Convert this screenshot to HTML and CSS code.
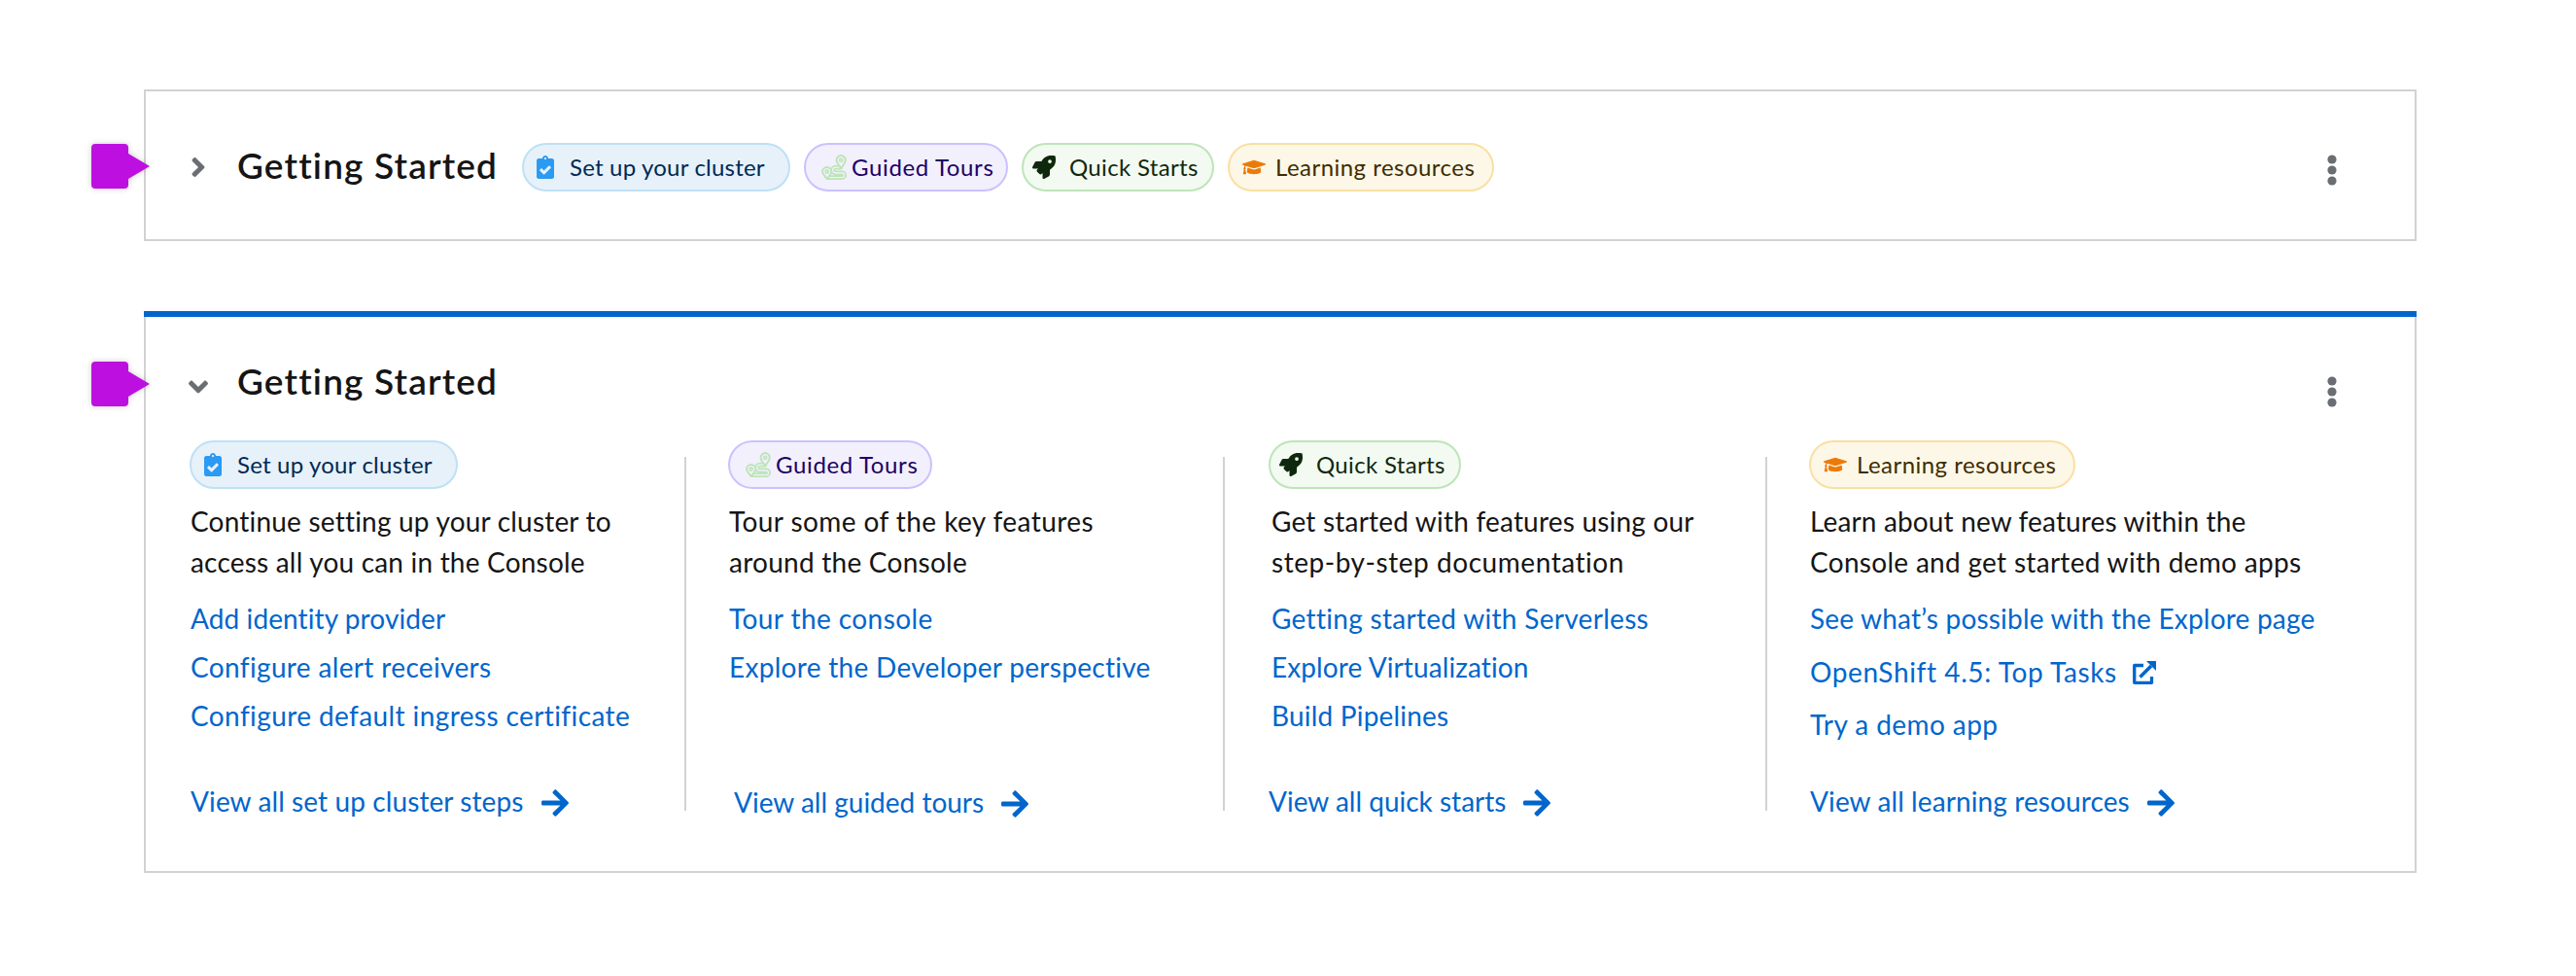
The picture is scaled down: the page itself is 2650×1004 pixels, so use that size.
FILE: index.html
```html
<!DOCTYPE html>
<html lang="en">
<head>
<meta charset="utf-8">
<title>Getting Started</title>
<link rel="stylesheet" href="styles.css">
</head>
<body>
<svg class="sprite" aria-hidden="true">
  <symbol id="i-right" viewBox="0 0 256 512"><path d="M224.3 273l-136 136c-9.4 9.4-24.6 9.4-33.9 0l-22.6-22.6c-9.4-9.4-9.4-24.6 0-33.9l96.4-96.4-96.4-96.4c-9.4-9.4-9.4-24.6 0-33.9L54.3 103c9.4-9.4 24.6-9.4 33.9 0l136 136c9.5 9.4 9.5 24.6.1 34z"/></symbol>
  <symbol id="i-down" viewBox="0 0 320 512"><path d="M143 352.3L7 216.3c-9.4-9.4-9.4-24.6 0-33.9l22.6-22.6c9.4-9.4 24.6-9.4 33.9 0l96.4 96.4 96.4-96.4c9.4-9.4 24.6-9.4 33.9 0l22.6 22.6c9.4 9.4 9.4 24.6 0 33.9l-136 136c-9.2 9.4-24.4 9.4-33.8 0z"/></symbol>
  <symbol id="i-kebab" viewBox="0 0 10 32"><circle cx="5" cy="5" r="4.6"/><circle cx="5" cy="16" r="4.6"/><circle cx="5" cy="27" r="4.6"/></symbol>
  <symbol id="i-arrow" viewBox="0 0 448 512"><path d="M190.5 66.9l22.2-22.2c9.4-9.4 24.6-9.4 33.9 0L441 239c9.4 9.4 9.4 24.6 0 33.9L246.6 467.3c-9.4 9.4-24.6 9.4-33.9 0l-22.2-22.2c-9.5-9.5-9.3-25 .4-34.3L311.4 296H24c-13.3 0-24-10.7-24-24v-32c0-13.3 10.7-24 24-24h287.4L190.9 101.2c-9.8-9.3-10-24.8-.4-34.3z"/></symbol>
  <symbol id="i-clipboard" viewBox="0 0 384 512"><path d="M336 64h-80c0-35.3-28.7-64-64-64s-64 28.7-64 64H48C21.5 64 0 85.5 0 112v352c0 26.5 21.5 48 48 48h288c26.5 0 48-21.5 48-48V112c0-26.5-21.5-48-48-48zM192 40c13.3 0 24 10.7 24 24s-10.7 24-24 24-24-10.7-24-24 10.7-24 24-24m121.2 231.8l-143 141.8c-4.7 4.7-12.3 4.6-17-.1l-82.6-83.3c-4.7-4.7-4.6-12.3.1-17L99.1 285c4.7-4.7 12.3-4.6 17 .1l46 46.4 106-105.2c4.7-4.7 12.3-4.6 17 .1l28.2 28.4c4.7 4.8 4.6 12.3-.1 17z"/></symbol>
  <symbol id="i-rocket" viewBox="0 0 512 512"><path d="M505.12 19.09c-1.19-5.53-6.66-11-12.21-12.18C460.72 0 435.51 0 410.41 0 307.18 0 245.27 55.2 199.05 128H94.84c-16.35.02-35.56 11.88-42.89 26.48L2.52 253.3A28.4 28.4 0 0 0 0 264a24 24 0 0 0 24 24h103.82l-22.48 22.47c-11.36 11.36-13 32.26 0 45.25l50.9 50.9c11.16 11.19 32.16 13.16 45.28 0L224 384.16V488a24 24 0 0 0 24 24 28.56 28.56 0 0 0 10.7-2.52l98.74-49.39c14.63-7.3 26.5-26.5 26.5-42.86V312.8c72.6-46.31 128.04-108.4 128.04-211.1.1-25.2.1-50.4-6.86-82.6zM384.04 168A40 40 0 1 1 424.05 128 40.02 40.02 0 0 1 384.04 168z"/></symbol>
  <symbol id="i-cap" viewBox="0 0 640 512"><path d="M622.34 153.2L343.4 67.5c-15.2-4.67-31.6-4.67-46.79 0L17.66 153.2c-23.54 7.23-23.54 38.36 0 45.59l48.63 14.94c-10.67 13.19-17.23 29.28-17.88 46.9C38.78 266.15 32 276.11 32 288c0 10.78 5.68 19.85 13.86 25.65L20.33 428.53C18.11 438.52 25.71 448 35.94 448h56.11c10.24 0 17.84-9.48 15.62-19.47L82.14 313.65C90.32 307.85 96 298.78 96 288c0-11.57-6.47-21.25-15.66-26.87.76-15.02 8.44-28.3 20.69-36.72L296.6 284.5c9.06 2.78 26.44 6.25 46.79 0l278.95-85.7c23.55-7.24 23.55-38.36 0-45.6zM352.79 315.09c-28.53 8.76-52.84 3.92-65.59 0l-145.02-44.55L128 384c0 35.35 85.96 64 192 64s192-28.65 192-64l-14.18-113.47-145.03 44.56z"/></symbol>
  <symbol id="i-route" viewBox="0 0 26 26">
    <g fill="none" stroke-linecap="round" stroke-linejoin="round">
      <path d="M19.5 13.2H14.6a2.9 2.9 0 0 0 0 5.800H21.300a2.300 2.300 0 0 1 0 4.600H7" stroke="#bde5b8" stroke-width="4.800"/>
      <path d="M19.500 13.200H14.600a2.900 2.900 0 0 0 0 5.800H21.300a2.300 2.300 0 0 1 0 4.600H8.500" stroke="#f2f0fc" stroke-width="1.300"/>
      <path d="M20.200 1.100a4.600 4.600 0 0 1 4.600 4.600c0 2.800-2.400 5.200-4.600 8.400-2.200-3.200-4.600-5.600-4.600-8.400a4.600 4.600 0 0 1 4.600-4.600zM5.700 13.100a4.600 4.600 0 0 1 4.600 4.500c0 2.600-2.200 4.600-4.600 7.300-2.400-2.700-4.600-4.700-4.600-7.300a4.600 4.600 0 0 1 4.600-4.500z" fill="#f2f0fc" stroke="#bde5b8" stroke-width="2"/>
      <circle cx="20.200" cy="5.700" r="1.500" stroke="#bde5b8" stroke-width="1.600"/>
      <circle cx="5.700" cy="17.600" r="1.500" stroke="#bde5b8" stroke-width="1.600"/>
    </g>
  </symbol>
  <symbol id="i-external" viewBox="0 0 24 24">
    <path d="M11 4.500H1.700V22.300H19.500V16" fill="none" stroke="currentColor" stroke-width="3.300" stroke-linejoin="round"/>
    <path d="M7.500 16.500L19 5" fill="none" stroke="currentColor" stroke-width="3.600"/>
    <path d="M14 0H24V10z"/>
  </symbol>
</svg>

<main class="page">
  <section class="card collapsed">
    <span class="marker"></span>
    <span class="toggle"><svg class="right"><use href="#i-right"/></svg></span>
    <h2 class="title">Getting Started</h2>
    <div class="pills">
      <span class="pill setup"><svg><use href="#i-clipboard"/></svg><span class="label">Set up your cluster</span></span>
      <span class="pill tours"><svg><use href="#i-route"/></svg><span class="label">Guided Tours</span></span>
      <span class="pill quick"><svg><use href="#i-rocket"/></svg><span class="label">Quick Starts</span></span>
      <span class="pill learn"><svg><use href="#i-cap"/></svg><span class="label">Learning resources</span></span>
    </div>
    <svg class="kebab"><use href="#i-kebab"/></svg>
  </section>

  <section class="card expanded">
    <span class="marker"></span>
    <header class="head">
      <span class="toggle"><svg class="down"><use href="#i-down"/></svg></span>
      <h2 class="title">Getting Started</h2>
      <svg class="kebab"><use href="#i-kebab"/></svg>
    </header>
    <div class="columns">
      <div class="column c1">
        <span class="pill setup"><svg><use href="#i-clipboard"/></svg><span class="label">Set up your cluster</span></span>
        <p class="desc t20">Continue setting up your cluster to<br>access all you can in the Console</p>
        <ul class="links">
          <li><a class="t10">Add identity provider</a></li>
          <li><a class="t35">Configure alert receivers</a></li>
          <li><a class="t40">Configure default ingress certificate</a></li>
        </ul>
        <a class="more"><span class="t10">View all set up cluster steps</span><svg><use href="#i-arrow"/></svg></a>
      </div>
      <i class="rule"></i>
      <div class="column c2">
        <span class="pill tours"><svg><use href="#i-route"/></svg><span class="label">Guided Tours</span></span>
        <p class="desc"><span class="t45">Tour some of the key features</span><br><span class="t25">around the Console</span></p>
        <ul class="links">
          <li><a class="t45">Tour the console</a></li>
          <li><a class="t30">Explore the Developer perspective</a></li>
        </ul>
        <a class="more"><span>View all guided tours</span><svg><use href="#i-arrow"/></svg></a>
      </div>
      <i class="rule"></i>
      <div class="column c3">
        <span class="pill quick"><svg><use href="#i-rocket"/></svg><span class="label">Quick Starts</span></span>
        <p class="desc"><span class="t20">Get started with features using our</span><br><span class="t55">step-by-step documentation</span></p>
        <ul class="links">
          <li><a class="t30">Getting started with Serverless</a></li>
          <li><a class="t10">Explore Virtualization</a></li>
          <li><a class="t20">Build Pipelines</a></li>
        </ul>
        <a class="more"><span>View all quick starts</span><svg><use href="#i-arrow"/></svg></a>
      </div>
      <i class="rule"></i>
      <div class="column c4">
        <span class="pill learn"><svg><use href="#i-cap"/></svg><span class="label">Learning resources</span></span>
        <p class="desc"><span class="t15">Learn about new features within the</span><br><span class="t30">Console and get started with demo apps</span></p>
        <ul class="links">
          <li><a class="t20">See what’s possible with the Explore page</a></li>
          <li><a class="t60">OpenShift 4.5: Top Tasks</a><svg class="external"><use href="#i-external"/></svg></li>
          <li><a class="t45">Try a demo app</a></li>
        </ul>
        <a class="more"><span class="t10">View all learning resources</span><svg><use href="#i-arrow"/></svg></a>
      </div>
    </div>
  </section>
</main>
</body>
</html>
```
FILE: styles.css
```css
* { box-sizing: border-box; }
body {
  margin: 0;
  background: #fff;
  color: #151515;
  font-family: Lato, "Liberation Sans", sans-serif;
  font-size: 28px;
  font-variant-ligatures: none;
}
svg { display: block; flex: none; fill: currentColor; }
.sprite { position: absolute; width: 0; height: 0; }
.page { padding: 92px 164px 0 148px; }

.card { position: relative; border: 2px solid #d2d2d2; background: #fff; }
.collapsed { display: flex; align-items: center; height: 156px; padding: 0 80px 0 44px; }
.expanded { margin-top: 72px; height: 578px; border-top: 0; }
.expanded::before { content: ""; display: block; height: 6px; margin: 0 -2px; background: #06c; }

/* callout flags that overlap the card's left edge */
.marker {
  position: absolute; left: -56px; top: 54px;
  width: 38px; height: 46px;
  border-radius: 4px; background: #bd10e0;
  filter: drop-shadow(0 0 3px rgba(0, 0, 0, .2));
}
.marker::after {
  content: ""; position: absolute; left: 38px; top: 10px;
  border: solid transparent; border-width: 13px 0 13px 22px; border-left-color: #bd10e0;
}
.expanded .marker { top: 52px; }

.toggle { width: 50px; color: #6a6e73; }
.collapsed .toggle { margin-top: 4px; }
.right { width: 16px; height: 32px; margin-left: 2px; }
.down { width: 20px; height: 32px; }
.title { margin: 0; width: 293px; font-size: 37px; line-height: 44px; font-weight: 600; letter-spacing: 1.15px; white-space: nowrap; }
.kebab { width: 10px; height: 32px; margin-left: auto; color: #6a6e73; }
.collapsed .kebab { margin-top: 10px; }
.head { display: flex; align-items: flex-start; height: 127px; padding: 44px 80px 0 44px; }
.head .toggle { padding-top: 12px; }
.head .kebab { margin-top: 17px; }

.pills { display: flex; gap: 14px; margin-top: 4px; }
.pill {
  display: flex; align-items: center; height: 50px; flex: none;
  border: 2px solid; border-radius: 25px;
  font-size: 24px; line-height: 44px; white-space: nowrap;
}
.label { margin-top: -1px; }
.setup { width: 276px; padding-left: 13px; gap: 16px; background: #e7f1fa; border-color: #bee1f4; }
.setup svg { width: 18px; height: 24px; color: #2b9af3; }
.setup .label { color: #002952; letter-spacing: .2px; }
.tours { width: 210px; padding-left: 16px; gap: 5px; background: #f2f0fc; border-color: #cbc1ff; }
.tours svg { width: 26px; height: 26px; }
.tours .label { color: #1f0066; letter-spacing: .64px; }
.quick { width: 198px; padding-left: 9px; gap: 14px; background: #f3faf2; border-color: #bde5b8; }
.quick svg { width: 24px; height: 24px; color: #0f280d; }
.quick .label { color: #0f280d; letter-spacing: .34px; }
.learn { width: 274px; padding-left: 13px; gap: 10px; background: #fdf7e7; border-color: #f9e0a2; }
.learn svg { width: 24px; height: 20px; color: #ec7a08; }
.learn .label { color: #3d2c00; letter-spacing: .47px; }

.columns { display: grid; grid-template-columns: 554px 2px 552px 2px 556px 2px 1fr; }
.rule { height: 364px; margin-top: 17px; background: #d2d2d2; }
.column { display: flex; flex-direction: column; align-items: flex-start; height: 392px; white-space: nowrap; }
.c1 { padding-left: 45px; }
.c2 { padding-left: 43px; }
.c3 { padding-left: 45px; }
.c4 { padding-left: 43px; }
.desc { margin: 12px 0 0; line-height: 42px; }
.links { list-style: none; margin: 12px 0 0; padding: 0; line-height: 50px; }
.links li { display: flex; align-items: center; }
.c1 .desc, .c1 .links, .c1 .more, .c2 .desc, .c2 .links, .c4 .desc, .c4 .links, .c4 .more { margin-left: 1px; }
.c3 .desc, .c3 .links { margin-left: 3px; }
.c4 .links { margin-top: 10px; line-height: 54.5px; }
.links, .more { color: #06c; }
.external { width: 24px; height: 24px; margin: 3px 0 0 16px; }
.more { display: flex; align-items: center; gap: 18px; margin-top: auto; line-height: 42px; }
.more svg { width: 28px; height: 32px; margin-top: 3px; }
.c2 .more { margin-left: 6px; margin-bottom: -1px; }

/* tracking steps */
.t10 { letter-spacing: .1px; }
.t15 { letter-spacing: .15px; }
.t20 { letter-spacing: .2px; }
.t25 { letter-spacing: .25px; }
.t30 { letter-spacing: .3px; }
.t35 { letter-spacing: .35px; }
.t40 { letter-spacing: .4px; }
.t45 { letter-spacing: .42px; }
.t55 { letter-spacing: .55px; }
.t60 { letter-spacing: .6px; }
```
